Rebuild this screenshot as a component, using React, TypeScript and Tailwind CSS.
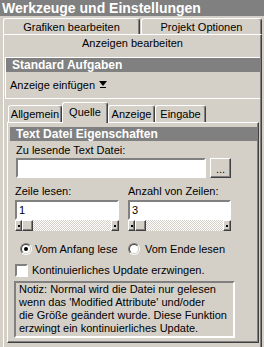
import React from "react";

const raised =
  "border border-t-white border-l-white border-b-[#404040] border-r-[#404040] shadow-[inset_-1px_-1px_0_#808080]";
const sunken =
  "border-2 border-t-[#808080] border-l-[#808080] border-b-white border-r-white";

function Tab({ className, children }: { className: string; children: React.ReactNode }) {
  return (
    <div
      className={
        "flex justify-center rounded-t-[3px] border-t border-l border-r border-t-white border-l-white border-r-[#404040] shadow-[inset_-1px_0_0_#808080] bg-[#d4d0c8] " +
        className
      }
    >
      {children}
    </div>
  );
}

function Header({ children }: { children: React.ReactNode }) {
  return (
    <div className="h-[14px] bg-[#808080] text-white font-bold text-[12px] leading-[14px] pl-[6px] whitespace-nowrap">
      {children}
    </div>
  );
}

function Input({ className, value }: { className: string; value?: string }) {
  return (
    <div className={sunken + " bg-white flex items-center pl-[2px] " + className}>
      <span className="leading-[13px]">{value}</span>
    </div>
  );
}

function Slider() {
  return (
    <div className="flex h-[11px]">
      <div className={raised + " w-[7px] flex items-center justify-center"}>
        <div className="w-[2px] h-[2px] bg-black" />
      </div>
      <div className={raised + " w-[11px]"} />
      <div className="flex-1 bg-[image:conic-gradient(#ffffff_25%,#d4d0c8_0_50%,#ffffff_0_75%,#d4d0c8_0)] bg-[length:2px_2px]" />
      <div className={raised + " w-[8px] flex items-center justify-center"}>
        <div className="w-[2px] h-[2px] bg-black" />
      </div>
    </div>
  );
}

function Radio({ checked }: { checked?: boolean }) {
  return (
    <div className="w-[12px] h-[12px] rounded-full border border-t-[#808080] border-l-[#808080] border-b-white border-r-white">
      <div className="w-full h-full rounded-full bg-white border border-t-[#404040] border-l-[#404040] border-b-[#d4d0c8] border-r-[#d4d0c8] flex items-center justify-center">
        {checked && <div className="w-[4px] h-[4px] rounded-full bg-black" />}
      </div>
    </div>
  );
}

export default function App() {
  return (
    <div className="w-[264px] h-[347px] overflow-hidden bg-[#d4d0c8] text-black text-[11px] leading-[13px] font-['Liberation_Sans',Arial,sans-serif]">
      <div className="h-[16px] bg-[#808080] text-white font-bold text-[14px] leading-[16px] pl-[2px] whitespace-nowrap">
        Werkzeuge und Einstellungen
      </div>
      <div className="pl-[3px] pr-[2px] pt-[2px]">
        <div className="flex h-[16px]">
          <Tab className="w-[137px] pt-[2px]">Grafiken bearbeiten</Tab>
          <Tab className="flex-1 ml-[1px] pt-[2px]">Projekt Optionen</Tab>
        </div>
        <div className="h-[313px] border-t border-l border-r border-t-white border-l-white border-r-[#404040] shadow-[inset_-1px_0_0_#808080]">
          <div className="h-[17px] flex items-center justify-center">Anzeigen bearbeiten</div>
          <div className="mt-[5px] ml-[1px] mr-[1px] border-t border-l border-b border-t-white border-l-white border-b-white">
            <Header>Standard Aufgaben</Header>
            <div className="h-[26px] flex items-center pl-[4px] gap-[4px]">
              <span>Anzeige einfügen</span>
              <svg width="8" height="8" viewBox="0 0 8 8">
                <polygon points="0,0 8,0 4,5" fill="#000" />
                <rect x="1" y="6" width="6" height="1" fill="#000" />
              </svg>
            </div>
          </div>
          <div className="mt-[3px] ml-[3px] mr-[2px]">
            <div className="flex h-[20px] items-end">
              <Tab className="ml-[1px] w-[54px] h-[17px] items-center">Allgemein</Tab>
              <Tab className="w-[46px] h-[21px] -mb-[1px] relative z-10 items-center pb-[2px]">Quelle</Tab>
              <Tab className="w-[47px] h-[17px] items-center">Anzeige</Tab>
              <Tab className="w-[51px] h-[17px] items-center">Eingabe</Tab>
            </div>
            <div className="h-[221px] border border-t-white border-l-white border-r-[#404040] border-b-[#404040] shadow-[inset_-1px_-1px_0_#808080] pt-[4px] pl-[2px] pr-[1px]">
              <Header>Text Datei Eigenschaften</Header>
              <div className="mt-[2px] h-[14px] flex items-center pl-[6px]">Zu lesende Text Datei:</div>
              <div className="mt-[1px] flex gap-[4px] ml-[6px]">
                <Input className="w-[190px] h-[20px]" />
                <div className={raised + " w-[21px] h-[20px] flex items-end justify-center pb-[3px]"}>
                  <span className="leading-[10px]">...</span>
                </div>
              </div>
              <div className="mt-[6px] ml-[5px] flex gap-[9px]">
                <div className="w-[104px]">
                  <div className="h-[14px] flex items-center">Zeile lesen:</div>
                  <Input className="mt-[2px] h-[20px]" value="1" />
                  <Slider />
                </div>
                <div className="w-[103px]">
                  <div className="h-[14px] flex items-center">Anzahl von Zeilen:</div>
                  <Input className="mt-[2px] h-[20px]" value="3" />
                  <Slider />
                </div>
              </div>
              <div className="mt-[11px] h-[14px] flex items-center">
                <div className="ml-[10px] w-[108px] flex items-center gap-[3px]">
                  <Radio checked />
                  <span>Vom Anfang lese</span>
                </div>
                <div className="flex items-center gap-[5px]">
                  <Radio />
                  <span>Vom Ende lesen</span>
                </div>
              </div>
              <div className="mt-[8px] ml-[5px] flex items-center gap-[4px] h-[13px]">
                <div className="w-[13px] h-[13px] bg-white border-2 border-t-[#808080] border-l-[#808080] border-b-white border-r-white" />
                <span>Kontinuierliches Update erzwingen.</span>
              </div>
              <div className={sunken + " mt-[4px] ml-[4px] w-[221px] h-[57px] pl-[3px] leading-[13px] whitespace-nowrap"}>
                Notiz: Normal wird die Datei nur gelesen
                <br />
                wenn das 'Modified Attribute' und/oder
                <br />
                die Größe geändert wurde. Diese Funktion
                <br />
                erzwingt ein kontinuierliches Update.
              </div>
            </div>
          </div>
        </div>
      </div>
    </div>
  );
}
